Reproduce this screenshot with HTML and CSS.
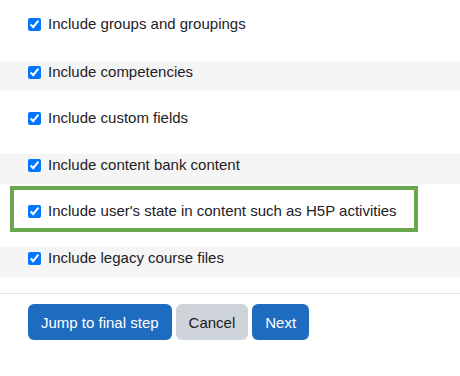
FILE: index.html
```html
<!DOCTYPE html>
<html lang="en">

<head>
    <meta charset="UTF-8">
    <meta name="viewport" content="width=device-width, initial-scale=1.0">
    <title>Backup settings</title>
    <link rel="stylesheet" href="styles.css">
</head>

<body>
    <form class="settings">
        <!-- Backup options -->
        <div class="setting first">
            <label><input type="checkbox" checked> Include groups and groupings</label>
        </div>
        <div class="setting alt">
            <label><input type="checkbox" checked> Include competencies</label>
        </div>
        <div class="setting">
            <label><input type="checkbox" checked> Include custom fields</label>
        </div>
        <div class="setting alt">
            <label><input type="checkbox" checked> Include content bank content</label>
        </div>
        <div class="setting marked">
            <div class="highlight">
                <label><input type="checkbox" checked> Include user's state in content such as H5P activities</label>
            </div>
        </div>
        <div class="setting alt">
            <label><input type="checkbox" checked> Include legacy course files</label>
        </div>

        <div class="buttons">
            <button type="button" class="btn btn-primary">Jump to final step</button>
            <button type="button" class="btn btn-secondary">Cancel</button>
            <button type="button" class="btn btn-primary">Next</button>
        </div>
    </form>
</body>

</html>
```

FILE: styles.css
```css
body {
    margin: 0;
    font-family: "Liberation Sans", Arial, sans-serif;
    font-size: 15px;
    color: #1d2125;
    background-color: #fff;
}

.setting {
    display: flex;
    align-items: flex-start;
    height: 63px;
    padding: 17px 28px 0;
    box-sizing: border-box;
    line-height: 20px;
}

.setting.first {
    height: 61px;
    padding-top: 14px;
}

.setting.alt {
    background-color: #f5f5f5;
    height: 30px;
    padding-top: 1px;
}

.setting label {
    display: flex;
    align-items: center;
}

.setting input {
    width: 13px;
    height: 13px;
    margin: 0 7px 0 0;
    accent-color: #0075ff;
}

.setting.marked {
    padding: 2px 0 0 10px;
}

.highlight {
    width: 408px;
    height: 46px;
    box-sizing: border-box;
    border: 4px solid #6aa84f;
    padding: 11px 14px 0;
}

.buttons {
    border-top: 1px solid #dee2e6;
    margin-top: 16px;
    padding: 10px 28px;
    display: flex;
    gap: 4px;
}

.btn {
    font-family: inherit;
    font-size: 15px;
    height: 36px;
    padding: 0 13px;
    border: none;
    border-radius: 6px;
    cursor: pointer;
}

.btn-primary {
    background-color: #1d6cc0;
    color: #fff;
}

.btn-secondary {
    background-color: #ced4da;
    color: #1d2125;
}
```
